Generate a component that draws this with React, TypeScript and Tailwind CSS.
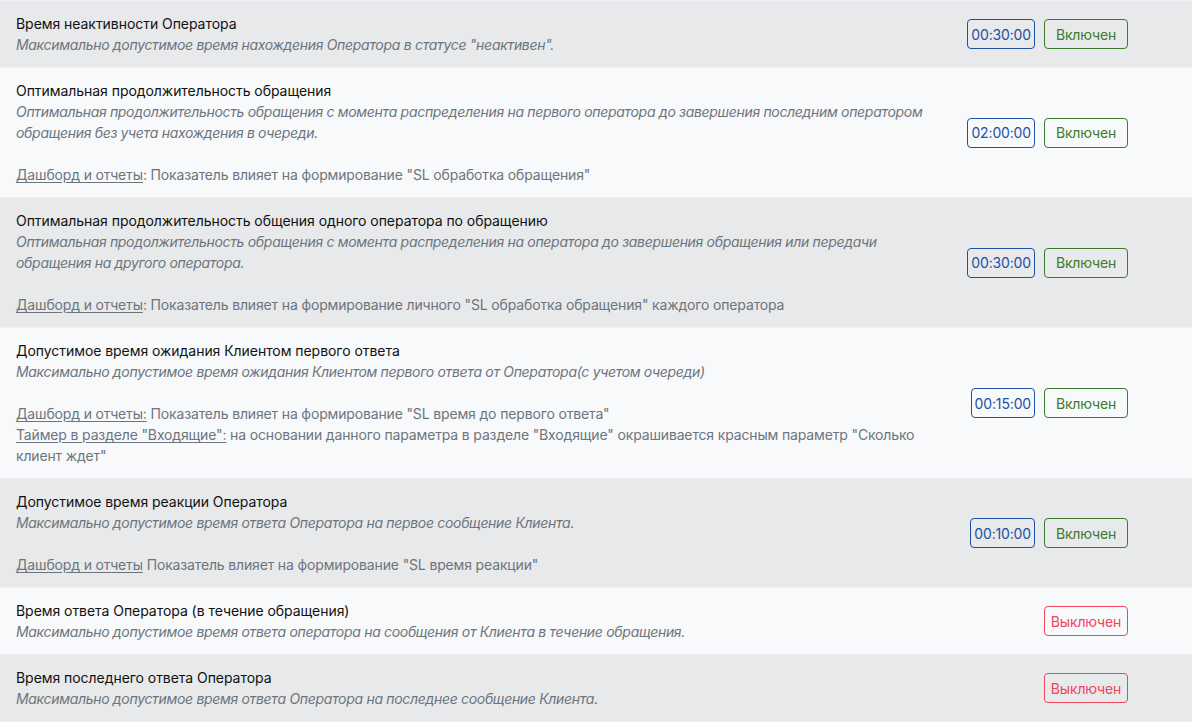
import React from 'react';

type Note = { label: string; text: string };

type Setting = {
  id: string;
  title: string;
  description: string;
  notes?: Note[];
  time?: string;
  enabled: boolean;
};

const settings: Setting[] = [
  {
    id: 'inactive',
    title: 'Время неактивности Оператора',
    description: 'Максимально допустимое время нахождения Оператора в статусе "неактивен".',
    time: '00:30:00',
    enabled: true,
  },
  {
    id: 'optimal',
    title: 'Оптимальная продолжительность обращения',
    description:
      'Оптимальная продолжительность обращения с момента распределения на первого оператора до завершения последним оператором обращения без учета нахождения в очереди.',
    notes: [{ label: 'Дашборд и отчеты', text: ': Показатель влияет на формирование "SL обработка обращения"' }],
    time: '02:00:00',
    enabled: true,
  },
  {
    id: 'optimal-one',
    title: 'Оптимальная продолжительность общения одного оператора по обращению',
    description:
      'Оптимальная продолжительность обращения с момента распределения на оператора до завершения обращения или передачи обращения на другого оператора.',
    notes: [
      {
        label: 'Дашборд и отчеты',
        text: ': Показатель влияет на формирование личного "SL обработка обращения" каждого оператора',
      },
    ],
    time: '00:30:00',
    enabled: true,
  },
  {
    id: 'first-answer',
    title: 'Допустимое время ожидания Клиентом первого ответа',
    description: 'Максимально допустимое время ожидания Клиентом первого ответа от Оператора(с учетом очереди)',
    notes: [
      { label: 'Дашборд и отчеты:', text: ' Показатель влияет на формирование "SL время до первого ответа"' },
      {
        label: 'Таймер в разделе "Входящие":',
        text: ' на основании данного параметра в разделе "Входящие" окрашивается красным параметр "Сколько клиент ждет"',
      },
    ],
    time: '00:15:00',
    enabled: true,
  },
  {
    id: 'reaction',
    title: 'Допустимое время реакции Оператора',
    description: 'Максимально допустимое время ответа Оператора на первое сообщение Клиента.',
    notes: [{ label: 'Дашборд и отчеты', text: ' Показатель влияет на формирование "SL время реакции"' }],
    time: '00:10:00',
    enabled: true,
  },
  {
    id: 'during',
    title: 'Время ответа Оператора (в течение обращения)',
    description: 'Максимально допустимое время ответа оператора на сообщения от Клиента в течение обращения.',
    enabled: false,
  },
  {
    id: 'last',
    title: 'Время последнего ответа Оператора',
    description: 'Максимально допустимое время ответа Оператора на последнее сообщение Клиента.',
    enabled: false,
  },
];

const App: React.FC = () => {
  return (
    <div
      className="w-[1192px] min-h-[722px] bg-[#f8f9fb] border-t border-[#eef0f3] text-[14px] leading-[21px] tracking-[-0.15px]"
      style={{ fontFamily: 'Inter, "Noto Sans", "Liberation Sans", sans-serif' }}
    >
      {settings.map((item, i) => (
        <div
          key={item.id}
          className={`flex items-center pl-4 pr-16 py-3 border-b border-[#eef0f3] ${
            i % 2 === 0 ? 'bg-[#e8e9eb]' : 'bg-[#f8f9fb]'
          }`}
        >
          <div className="w-[929px] shrink-0">
            <div className="text-[#111111] tracking-[-0.05px]">{item.title}</div>
            <div className="italic text-[#6c757d] tracking-[-0.32px]">{item.description}</div>
            {item.notes && (
              <div className="mt-[21px] text-[#6c757d]">
                {item.notes.map(n => (
                  <div key={n.label}>
                    <span className="underline underline-offset-2">{n.label}</span>
                    {n.text}
                  </div>
                ))}
              </div>
            )}
          </div>
          <div className="flex-1 flex items-center justify-end gap-[9px]">
            {item.time && (
              <span className="h-[30px] px-[3px] flex items-center rounded-[4px] border border-[#1d4fa3] text-[#1d4fa3]">
                {item.time}
              </span>
            )}
            {item.enabled ? (
              <button className="w-[84px] h-[30px] rounded-[4px] border border-[#3d7a2a] text-[#3d7a2a]">
                Включен
              </button>
            ) : (
              <button className="w-[84px] h-[30px] rounded-[4px] border border-[#f0455c] text-[#f0455c]">
                Выключен
              </button>
            )}
          </div>
        </div>
      ))}
    </div>
  );
};

export default App;
